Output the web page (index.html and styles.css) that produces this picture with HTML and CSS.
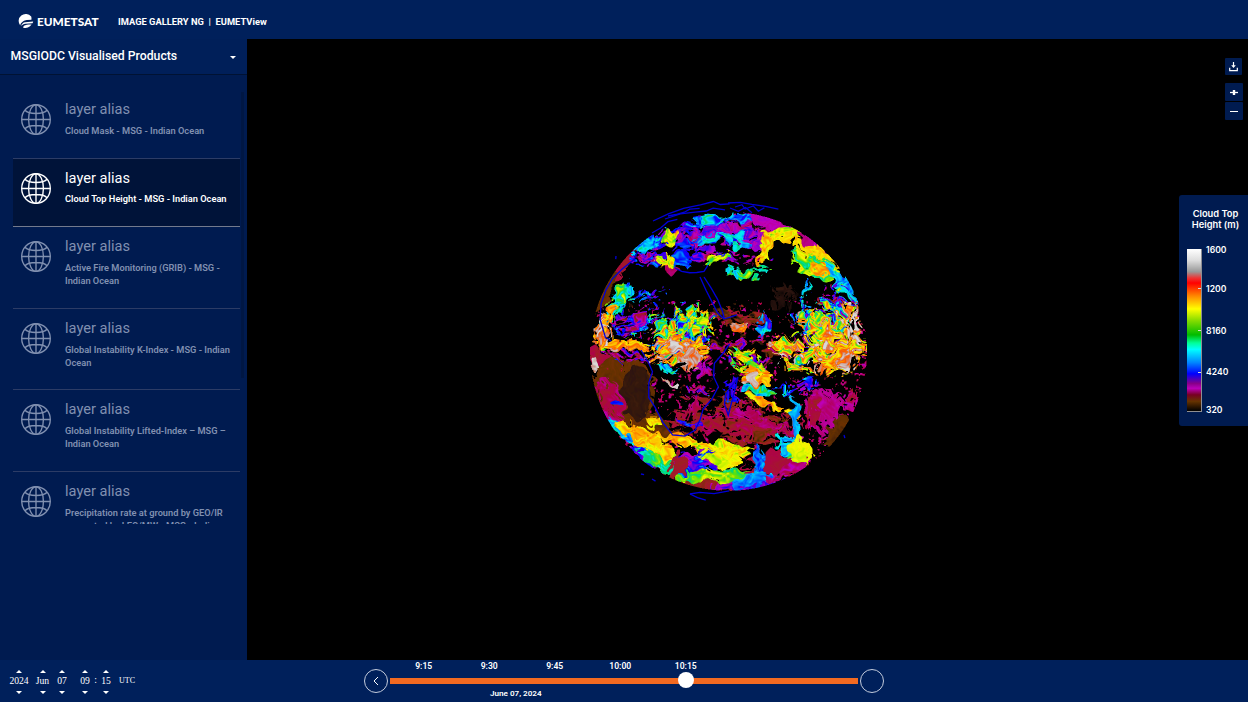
FILE: index.html
```html
<!DOCTYPE html>
<html lang="en">
<head>
<meta charset="utf-8">
<title>EUMETView</title>
<link rel="stylesheet" href="styles.css">
</head>
<body>
<svg class="defs" aria-hidden="true">
  <symbol id="globe" viewBox="0 0 30 31">
    <g fill="none" stroke="currentColor" stroke-width="1.35">
      <ellipse cx="15" cy="15.5" rx="14.3" ry="14.8"/>
      <ellipse cx="15" cy="15.5" rx="7.4" ry="14.8"/>
      <path d="M15 .7v29.6M.7 15.5h28.6M4 6.3c3.5 4.3 18.5 4.3 22 0M4 24.7c3.5-4.3 18.5-4.3 22 0"/>
    </g>
  </symbol>
</svg>
<div class="app">
  <header class="header">
    <svg class="logo-mark" viewBox="0 0 16 15"><path fill="#fff" d="M13.2 3.6A7 7 0 1 0 2.2 12.4C2.8 9.4 6 7.4 8.8 7.1L13.4 6.8C13.6 5.6 13.5 4.6 13.2 3.6zM7.2 9.2l8-.8-.6 1.8-7.2.5C5.6 11 4.2 11.8 3.2 13 3.6 10.8 5.2 9.4 7.2 9.2zM7.2 12.2c2-.6 4.4-.7 6.4-.7A7 7 0 0 1 5 14.4c.3-1 1.2-1.8 2.2-2.2z"/></svg>
    <span class="logo-text">EUMETSAT</span>
    <span class="app-name">IMAGE GALLERY NG &nbsp;|&nbsp; EUMETView</span>
  </header>
  <main class="main">
    <aside class="sidebar">
      <div class="category"><span class="category-name">MSGIODC Visualised Products</span><i class="caret"></i></div>
      <div class="list">
        <div class="layers">
          <div class="layer"><svg class="globe-icon"><use href="#globe"/></svg><div class="layer-text"><div class="alias">layer alias</div><div class="desc">Cloud Mask - MSG - Indian Ocean</div></div></div>
          <div class="layer layer-active"><svg class="globe-icon"><use href="#globe"/></svg><div class="layer-text"><div class="alias">layer alias</div><div class="desc">Cloud Top Height - MSG - Indian Ocean</div></div></div>
          <div class="layer layer-tall"><svg class="globe-icon"><use href="#globe"/></svg><div class="layer-text"><div class="alias">layer alias</div><div class="desc">Active Fire Monitoring (GRIB) - MSG -<br>Indian Ocean</div></div></div>
          <div class="layer layer-tall"><svg class="globe-icon"><use href="#globe"/></svg><div class="layer-text"><div class="alias">layer alias</div><div class="desc">Global Instability K-Index - MSG - Indian<br>Ocean</div></div></div>
          <div class="layer layer-tall"><svg class="globe-icon"><use href="#globe"/></svg><div class="layer-text"><div class="alias">layer alias</div><div class="desc">Global Instability Lifted-Index – MSG –<br>Indian Ocean</div></div></div>
          <div class="layer layer-tall"><svg class="globe-icon"><use href="#globe"/></svg><div class="layer-text"><div class="alias">layer alias</div><div class="desc">Precipitation rate at ground by GEO/IR<br>supported by LEO/MW - MSG - Indian</div></div></div>
        </div>
        <div class="scrollbar"></div>
      </div>
    </aside>
    <section class="map">
      <canvas id="earth" class="earth" width="300" height="310"></canvas>
      <div class="controls">
        <button class="ctl ctl-download"><svg viewBox="0 0 17 17"><path d="M8.5 4v5M4.7 9.7v3h7.6v-3" fill="none" stroke="#fff" stroke-width="1.2"/><path d="M6.2 7.2h4.6L8.5 10z" fill="#fff"/></svg></button>
        <button class="ctl"><svg viewBox="0 0 18 18"><path d="M5 9.5h8" stroke="#fff" stroke-width="1.3"/><path d="M9 7v5" stroke="#fff" stroke-width="2.4"/></svg></button>
        <button class="ctl"><svg viewBox="0 0 18 18"><path d="M5 9.5h8" stroke="#fff" stroke-width="1"/></svg></button>
      </div>
      <div class="legend">
        <div class="legend-title">Cloud Top<br>Height (m)</div>
        <div class="legend-body">
          <div class="ramp"><i></i><i></i><i></i></div>
          <div class="ticks"><span>1600</span><span>1200</span><span>8160</span><span>4240</span><span>320</span></div>
        </div>
      </div>
    </section>
  </main>
  <footer class="footer">
    <div class="clock">
      <div class="unit unit-year"><i class="up"></i>2024<i class="down"></i></div>
      <div class="unit unit-month"><i class="up"></i>Jun<i class="down"></i></div>
      <div class="unit unit-day"><i class="up"></i>07<i class="down"></i></div>
      <div class="unit unit-hour"><i class="up"></i>09<i class="down"></i></div>
      <span class="colon">:</span>
      <div class="unit unit-minute"><i class="up"></i>15<i class="down"></i></div>
      <span class="utc">UTC</span>
    </div>
    <div class="timeline">
      <button class="round"><svg viewBox="0 0 24 24"><path d="M14 8l-4 4 4 4" fill="none" stroke="#fff" stroke-width="1"/></svg></button>
      <div class="track-area">
        <div class="times"><span>9:15</span><span>9:30</span><span>9:45</span><span>10:00</span><span>10:15</span></div>
        <div class="track"><i class="knob"></i></div>
        <div class="date">June 07, 2024</div>
      </div>
      <button class="round"></button>
    </div>
  </footer>
</div>
<script src="earth.js"></script>
</body>
</html>
```
FILE: styles.css
```css
* { box-sizing: border-box; }
body { margin: 0; background: #000; font-family: Roboto, "Liberation Sans", sans-serif; color: #fff; overflow: hidden; }
button { padding: 0; border: 0; background: none; display: block; }
svg { display: block; }
.defs { position: absolute; width: 0; height: 0; }
.app { width: 1248px; height: 702px; display: grid; grid-template-rows: 39px 621px 42px; }
.header { background: #00205b; display: flex; align-items: center; padding: 4px 0 0 18px; white-space: nowrap; }
.logo-mark { width: 16px; height: 15px; margin-right: 3px; margin-top: -2px; }
.logo-text { width: 81px; font: 900 11.8px Lato, sans-serif; }
.app-name { font-weight: 700; font-size: 9.3px; letter-spacing: .02px; }
.main { display: grid; grid-template-columns: 247px 1fr; }
.sidebar { background: #001b50; }
.category { height: 36px; background: #001f59; border-bottom: 1px solid #001233; display: flex; align-items: center; justify-content: space-between; padding: 0 11px 2px 10.5px; font-size: 12.25px; font-weight: 500; white-space: nowrap; }
.caret { border: 3.5px solid transparent; border-top-color: #fff; border-bottom: 0; margin-top: 3px; }
.list { display: flex; height: 449px; padding: 15px 3px 0 13px; }
.layers { width: 227px; height: 434px; overflow: hidden; }
.scrollbar { width: 3px; height: 286px; margin: 2px 0 0 1px; background: #001744; }
.layer { height: 68.5px; display: flex; padding: 9px 0 0 8px; border-bottom: 1px solid #2c3c66; color: #8090b0; white-space: nowrap; }
.layer-tall { height: 81.5px; }
.layer-active { background: #001339; border-color: #737a8d; color: #fff; }
.globe-icon { width: 30px; height: 31px; margin: 5px 14px 0 0; flex: none; }
.alias { font-size: 14.6px; line-height: 21px; }
.desc { font-size: 9.25px; line-height: 13px; font-weight: 600; margin-top: 4px; }
.layer-active .desc { margin-top: 3px; }
.map { position: relative; background: #000; display: grid; grid-template-rows: 156px auto; justify-items: end; align-content: start; }
.earth { position: absolute; left: 333px; top: 156px; }
.controls { padding: 19px 5px 0 0; }
.ctl { width: 18px; height: 18px; background: #001b50; margin-bottom: 1px; border-radius: 1px; }
.ctl-download { width: 17px; height: 17px; margin-bottom: 8px; }
.legend { z-index: 1; width: 69px; height: 231px; background: #001b50; border-radius: 3px 0 0 3px; font-family: Inter, sans-serif; }
.legend-title { padding: 13px 0 0 4px; height: 54px; text-align: center; font-size: 9.3px; line-height: 11px; font-weight: 600; }
.legend-body { display: flex; padding-left: 8px; }
.ramp { width: 15px; height: 163px; border: solid #8e8e92; border-width: 0 1px 1px 0; display: flex; flex-direction: column; align-items: flex-end; background: linear-gradient(#fff 0%, #ddd 7%, #999 14%, #e33 18%, #f00 21%, #f80 29%, #ff0 37%, #8d0 44%, #0b0 53%, #0f9 58%, #0ff 62%, #08f 70%, #00f 77%, #808 83%, #b0b 86%, #702 90%, #630 94%, #000 100%); }
.ramp i { width: 3px; height: 1px; background: #ddd; margin-top: 39px; }
.ramp i + i { margin-top: 41px; }
.ticks { display: grid; grid-template-rows: 39px 42px 41px 38px 12px; padding-left: 4px; margin-top: -5px; font-size: 8.6px; line-height: 12px; font-weight: 600; }
.footer { background: #00205b; display: flex; }
.clock { width: 364px; display: flex; align-items: flex-start; padding: 10px 0 0 9px; font: 9.6px/12px "Liberation Serif", serif; }
.unit { display: flex; flex-direction: column; align-items: center; }
.unit-year { width: 20px; }
.unit-month { width: 23px; margin-left: 2px; }
.unit-day { width: 12px; margin-left: 2px; }
.unit-hour { width: 12px; margin-left: 11px; }
.unit-minute { width: 12px; }
.colon { width: 9px; text-align: center; margin-top: 4px; }
.up, .down { border: 3.5px solid transparent; }
.up { border-bottom-color: #fff; border-top: 0; margin-bottom: 2px; }
.down { border-top-color: #fff; border-bottom: 0; margin-top: 4px; }
.utc { margin: 5px 0 0 7px; font-size: 8px; }
.timeline { display: flex; }
.round { width: 24px; height: 24px; margin-top: 9px; border: 1px solid #c3cbdc; border-radius: 50%; }
.round svg { margin: -1px; }
.track-area { width: 468px; margin: 0 2px; }
.times { display: flex; height: 18px; padding-left: 1px; font-size: 8.6px; line-height: 12px; font-weight: 600; }
.times span { width: 65.5px; text-align: center; }
.track { height: 6px; background: #f26a21; display: flex; align-items: center; padding-left: 288px; }
.knob { width: 16px; height: 16px; margin-top: -2px; border-radius: 50%; background: #fff; flex: none; }
.date { font-size: 8.1px; line-height: 12px; font-weight: 600; padding: 3px 0 0 100px; }
```
FILE: earth.js
```js
// Paints the cloud top height product: a height field mapped through the legend colours.
const OX = 580, OY = 195, W = 300, H = 310;
const ctx = document.getElementById('earth').getContext('2d');

let seed = 7;
function rnd() { seed = (seed * 1664525 + 1013904223) >>> 0; return seed / 4294967296; }
const table = Array.from({ length: 65536 }, rnd);
function lattice(x, y, k) { return table[((x * 73 + y * 1931 + k * 7919) & 65535)]; }
function noise(x, y, k) {
  const a = Math.floor(x), b = Math.floor(y);
  let u = x - a, v = y - b; u = u * u * (3 - 2 * u); v = v * v * (3 - 2 * v);
  return (lattice(a, b, k) * (1 - u) + lattice(a + 1, b, k) * u) * (1 - v) +
         (lattice(a, b + 1, k) * (1 - u) + lattice(a + 1, b + 1, k) * u) * v;
}
function fbm(x, y, k) { return noise(x / 8, y / 8, k) * .28 + noise(x / 3.4, y / 3.4, k + 1) * .37 + noise(x / 1.5, y / 1.5, k + 2) * .35 - .5; }

const stops = [[0,0,0,0],[.05,45,20,15],[.1,105,50,0],[.15,160,30,35],[.2,175,0,75],[.27,190,0,190],[.33,100,0,220],[.4,0,0,255],[.47,0,130,255],[.54,0,235,245],[.6,0,215,110],[.65,110,225,0],[.72,245,250,0],[.8,255,160,0],[.87,250,85,0],[.92,200,150,140],[1,215,215,215]];
function colour(v) {
  v = Math.max(0, Math.min(1, v));
  let i = 1; while (stops[i][0] < v) i++;
  const p = stops[i - 1], q = stops[i], t = (v - p[0]) / (q[0] - p[0]);
  return [1, 2, 3].map(n => p[n] + (q[n] - p[n]) * t);
}

// x, y, rx, ry, angle, height, variation, cover
const fields = [
[735,425,62,17,5,.17,.18,.7],[740,405,65,12,12,.13,.2,.3],[738,318,30,13,0,.13,.25,.4],[782,300,15,17,0,.04,.05,.5],[745,350,55,18,5,.15,.6,.15],
[690,233,45,11,-12,.36,.3,.55],[745,232,30,15,5,.3,.3,.6],[725,255,42,12,0,.27,.4,.25],
[623,263,22,7,-52,.17,.05,1.4],[605,292,18,6,-60,.1,.03,1.4],
[647,242,19,8,-38,.48,.35,1],[648,259,16,9,-10,.35,.5,.6],[669,237,7,8,20,.68,.3,1.2],[671,269,8,4,0,.21,.06,1.2],[669,261,12,6,-15,.74,.3,1],
[686,254,13,12,0,.42,.2,.8],[698,238,15,9,25,.25,.2,.4],[718,258,13,6,-20,.68,.25,.9],[715,220,24,4,-8,.52,.45,1],[720,228,23,4,4,.3,.2,1],[720,238,26,5,-4,.43,.35,.9],
[741,218,18,4,5,.48,.3,1],[768,223,25,6,21,.27,.07,1.2],[758,228,16,3,15,.02,.03,.5],[735,241,15,7,5,.54,.25,.8],[764,238,16,9,-15,.26,.2,.5],
[784,234,21,6,-9,.73,.25,1.1],[766,250,6,16,15,.75,.25,.9],[748,273,20,7,0,.62,.3,.6],
[813,246,17,5,39,.25,.08,1.3],[816,254,25,7,28,.76,.12,1.2],[814,265,25,11,28,.66,.3,1.1],[821,270,11,7,20,.8,.2,.9],[843,283,21,6,51,.53,.25,1.2],
[838,302,22,18,45,.35,.9,.3],[805,293,4,17,5,.53,.25,.6],
[820,332,30,28,0,.35,.9,.5],[822,332,22,27,-60,.8,.6,.55],[836,314,20,18,40,.6,1.1,.3],[854,330,10,32,-8,.86,.7,.6],[804,315,12,20,10,.48,.7,.3],
[617,303,25,8,-58,.57,.4,.85],[609,317,14,5,-62,.77,.3,.8],[600,328,6,16,10,.8,.6,.7],[650,297,24,10,-20,.46,.45,.2],[639,320,29,16,-25,.4,.7,.35],[620,345,29,6,2,.82,.4,.9],[604,337,9,9,0,.86,.5,.6],
[680,335,34,27,-35,.35,.8,.4],[680,333,32,25,-35,.74,.8,.5],[695,324,19,14,-60,.66,.6,.5],[676,352,30,14,-5,.84,.5,.75],[691,359,10,11,0,.93,.3,.9],[669,370,12,5,10,.55,.35,.9],
[740,327,9,5,-5,.9,.4,1],[762,324,7,13,0,.43,.4,.6],[783,346,19,9,15,.78,.7,.45],
[603,362,21,9,30,.17,.1,1],[622,393,29,31,-20,.1,.03,1.6],[646,420,33,10,35,.1,.05,1.3],[637,393,13,23,-5,.055,.02,1.6],[610,400,11,19,-25,.21,.1,1.2],[616,403,4,3,0,.43,.1,1],[595,364,4,6,0,.95,.2,1],[622,356,24,6,10,.3,.7,.3],
[615,424,22,5,43,.23,.15,1],[630,437,30,5,40,.53,.25,1.1],[648,442,34,8,35,.78,.2,1.1],[661,455,26,9,32,.76,.2,1.2],[653,423,8,7,20,.74,.2,.7],[690,444,35,6,10,.77,.25,.9],[723,449,26,7,8,.72,.25,1],[646,457,17,4,35,.35,.3,1.1],[667,467,30,5,30,.6,.2,1.2],
[696,463,22,12,-8,.36,.35,1.1],[677,467,8,14,24,.16,.03,1.2],[717,458,20,5,12,.7,.15,.8],[714,477,34,7,-5,.66,.2,1.3],[728,457,11,10,-5,.73,.15,1.2],[709,486,30,4,4,.14,.06,1.3],[735,485,22,4,-3,.31,.2,1.2],
[668,383,9,2,25,.95,.2,1.2],[693,405,9,14,0,.21,.1,.5],[703,373,8,15,20,.28,.25,.6],[698,392,16,5,10,.3,.6,.4],[688,424,14,4,18,.4,.3,.5],
[745,360,17,11,25,.67,.5,.7],[754,377,15,10,0,.83,.3,1],[752,378,6,5,-25,.97,.08,1.4],[758,391,14,4,10,.53,.3,1],[730,394,8,14,0,.4,.2,.5],
[822,358,38,20,0,.82,.7,.55],[839,358,28,16,-30,.86,.5,.7],[793,365,13,10,0,.76,.7,.45],[800,387,25,8,-8,.38,.5,.3],
[829,414,20,25,-40,.24,.08,.8],[814,410,8,22,10,.19,.15,.5],[852,399,10,14,20,.2,.25,.6],[838,430,18,7,-58,.09,.04,1.2],[774,405,26,3,25,.78,.25,1],[765,421,40,6,22,.21,.15,.7],
[777,464,30,13,-10,.18,.04,1],[796,420,4,21,-8,.49,.15,1],[791,449,16,11,18,.54,.3,1],[801,450,11,12,0,.71,.08,1.6],[758,468,6,21,0,.48,.2,1],[755,481,21,6,-5,.48,.15,1.1],[788,472,22,5,-24,.24,.15,1],[755,488,30,3,-12,.32,.2,1.2]
].map(f => ({ f, c: Math.cos(f[4] * Math.PI / 180), s: Math.sin(f[4] * Math.PI / 180) }));

function sample(x, y) {
  if (((x - 728.5) / 138.5) ** 2 + ((y - 351.3) / 139.5) ** 2 > 1) return [0, 0, 0];
  const wx = x + (noise(x / 7, y / 7, 50) - .5) * 8;
  const wy = y + (noise(x / 7, y / 7, 60) - .5) * 8;
  const speck = fbm(x, y, 90);
  let v = speck > .17 && y > 300 ? .08 + speck * .6 : 0;
  fields.forEach(({ f, c, s }, k) => {
    const dx = wx - f[0], dy = wy - f[1];
    if (Math.abs(dx) > 90 || Math.abs(dy) > 60) return;
    const along = dx * c + dy * s, across = dy * c - dx * s;
    const stretch = f[2] > f[3] ? 1.7 : 1, squeeze = f[2] > f[3] ? 1 : 1.7;
    const d = (along / f[2]) ** 2 + (across / f[3]) ** 2;
    if (d > 1.4) return;
    const nx = (along + 300) / stretch, ny = (across + 300) / squeeze;
    if (fbm(nx, ny, 3 + k * 4) * 3 + f[7] * .85 - d * .75 > 0) v = f[5] + fbm(nx + 31, ny + 11, k * 5) * f[6] * 1.3;
  });
  return colour(v);
}

const img = ctx.createImageData(W, H);
for (let j = 0; j < H; j++) for (let i = 0; i < W; i++) {
  const o = (j * W + i) * 4;
  for (const [a, b] of [[.25, .25], [.75, .25], [.25, .75], [.75, .75]]) {
    const rgb = sample(i + OX + a, j + OY + b);
    for (let n = 0; n < 3; n++) img.data[o + n] += rgb[n] / 4;
  }
  img.data[o + 3] = 255;
}
ctx.putImageData(img, 0, 0);

// Coastlines
ctx.translate(-OX, -OY);
ctx.strokeStyle = '#0000d8'; ctx.lineWidth = 1.3;
[
 [653,221,668,214,684,208,700,205,713,202,720,204,730,204],[665,219,680,214,695,212,706,211,713,208,725,210],[668,216,676,215,684,212,690,209,700,208],
 [728,203,740,202,752,204,765,206,778,209],[735,207,742,205,745,209,753,206,758,211,764,208],[730,208,738,211,746,208,752,213],
 [652,233,661,228,668,222,677,219],[638,251,634,260,622,270,613,279,606,290,601,304,600,320,605,337,611,341],
 [675,268,682,271,690,273,697,273,704,271,708,266],[700,277,706,290,713,303,718,313,724,319],[704,277,711,288,717,299,722,311,724,319],
 [641,350,648,362,652,372,649,383,649,397,655,407,663,423,673,435,685,436,695,430,700,420,703,409,712,399,718,387,714,376,714,363,724,352,730,344],
 [724,319,737,315],[738,377,735,391,728,415,724,404,726,394,738,377],
 [690,494,700,492,714,494,729,491],[690,494,698,498,706,500],[616,256,616,259],[844,435,845,438],[641,474,644,475],[652,479,656,481]
].forEach(p => {
  ctx.beginPath(); ctx.moveTo(p[0], p[1]);
  for (let n = 2; n < p.length; n += 2) ctx.lineTo(p[n] + rnd() - .5, p[n + 1] + rnd() - .5);
  ctx.stroke();
});
```
